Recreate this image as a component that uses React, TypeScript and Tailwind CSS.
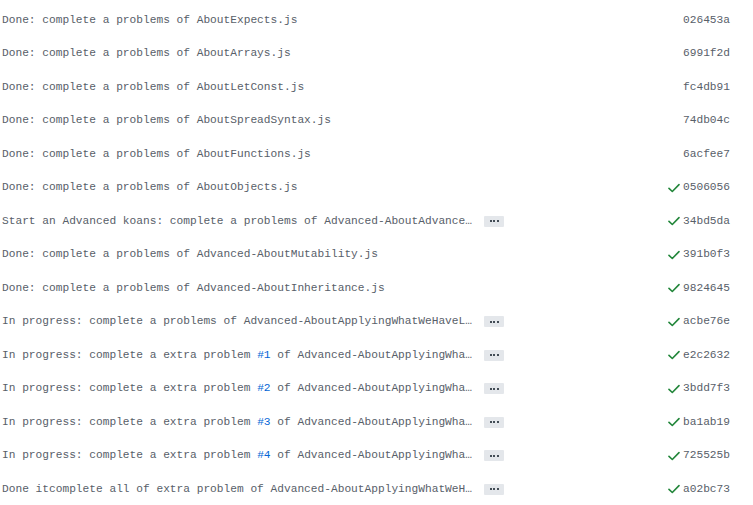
import React from "react";

type Commit = {
  msg: React.ReactNode;
  hash: string;
  ok?: boolean;
  more?: boolean;
};

const Issue = ({ n }: { n: number }) => (
  <a href="#" className="text-[#0366d6]">
    #{n}
  </a>
);

const commits: Commit[] = [
  { msg: "Done: complete a problems of AboutExpects.js", hash: "026453a" },
  { msg: "Done: complete a problems of AboutArrays.js", hash: "6991f2d" },
  { msg: "Done: complete a problems of AboutLetConst.js", hash: "fc4db91" },
  { msg: "Done: complete a problems of AboutSpreadSyntax.js", hash: "74db04c" },
  { msg: "Done: complete a problems of AboutFunctions.js", hash: "6acfee7" },
  { msg: "Done: complete a problems of AboutObjects.js", hash: "0506056", ok: true },
  {
    msg: "Start an Advanced koans: complete a problems of Advanced-AboutAdvancedFunctions.js",
    hash: "34bd5da",
    ok: true,
    more: true,
  },
  { msg: "Done: complete a problems of Advanced-AboutMutability.js", hash: "391b0f3", ok: true },
  { msg: "Done: complete a problems of Advanced-AboutInheritance.js", hash: "9824645", ok: true },
  {
    msg: "In progress: complete a problems of Advanced-AboutApplyingWhatWeHaveLearnt.js",
    hash: "acbe76e",
    ok: true,
    more: true,
  },
  {
    msg: (
      <>
        In progress: complete a extra problem <Issue n={1} /> of Advanced-AboutApplyingWhatWeHaveLearnt.js
      </>
    ),
    hash: "e2c2632",
    ok: true,
    more: true,
  },
  {
    msg: (
      <>
        In progress: complete a extra problem <Issue n={2} /> of Advanced-AboutApplyingWhatWeHaveLearnt.js
      </>
    ),
    hash: "3bdd7f3",
    ok: true,
    more: true,
  },
  {
    msg: (
      <>
        In progress: complete a extra problem <Issue n={3} /> of Advanced-AboutApplyingWhatWeHaveLearnt.js
      </>
    ),
    hash: "ba1ab19",
    ok: true,
    more: true,
  },
  {
    msg: (
      <>
        In progress: complete a extra problem <Issue n={4} /> of Advanced-AboutApplyingWhatWeHaveLearnt.js
      </>
    ),
    hash: "725525b",
    ok: true,
    more: true,
  },
  {
    msg: "Done itcomplete all of extra problem of Advanced-AboutApplyingWhatWeHaveLearnt.js",
    hash: "a02bc73",
    ok: true,
    more: true,
  },
];

function Check() {
  return (
    <svg width="12" height="12" viewBox="0 0 12 12" className="shrink-0">
      <path d="M1 6.4 L4.3 9.5 L11 2.6" fill="none" stroke="#22863a" strokeWidth="1.6" strokeLinecap="round" strokeLinejoin="round" />
    </svg>
  );
}

export default function App() {
  return (
    <div
      className="w-[753px] h-[505px] bg-white pt-[3.5px] overflow-hidden text-[11.2px] text-[#586069]"
      style={{ fontFamily: '"Liberation Mono", "DejaVu Sans Mono", monospace' }}
    >
      {commits.map((c) => (
        <div key={c.hash} className="flex items-center h-[33.5px] pl-[2px] pr-[23px]">
          <div className="flex items-center flex-1 min-w-0">
            <span className="max-w-[470px] truncate whitespace-nowrap leading-none">{c.msg}</span>
            {c.more && (
              <span className="ml-3 flex items-center justify-center gap-[1.5px] w-[20px] h-[11px] rounded-[1px] bg-[#e4e7eb]">
                <i className="block w-[2px] h-[2px] bg-[#444d56]" />
                <i className="block w-[2px] h-[2px] bg-[#444d56]" />
                <i className="block w-[2px] h-[2px] bg-[#444d56]" />
              </span>
            )}
          </div>
          <div className="flex items-center gap-[3px]">
            {c.ok && <Check />}
            <span className="leading-none">{c.hash}</span>
          </div>
        </div>
      ))}
    </div>
  );
}
